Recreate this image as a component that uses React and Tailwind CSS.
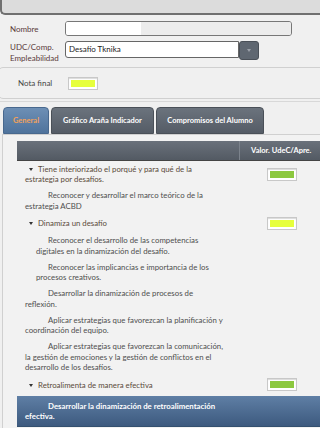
import React from 'react';

const rows = [
  { kind: 'group', lines: ['Tiene interiorizado el porqué y para qué de la', 'estrategia por desafíos.'], color: 'bg-[#8cc83f]' },
  { kind: 'item', lines: ['Reconocer y desarrollar el marco teórico de la', 'estrategia ACBD'] },
  { kind: 'group', lines: ['Dinamiza un desafío'], color: 'bg-[#e6ff3c]' },
  { kind: 'item', lines: ['Reconocer el desarrollo de las competencias', 'digitales en la dinamización del desafío.'], pad: true },
  { kind: 'item', lines: ['Reconocer las implicancias e importancia de los', 'procesos creativos.'], pad: true },
  { kind: 'item', lines: ['Desarrollar la dinamización de procesos de', 'reflexión.'] },
  { kind: 'item', lines: ['Aplicar estrategias que favorezcan la planificación y', 'coordinación del equipo.'] },
  { kind: 'item', lines: ['Aplicar estrategias que favorezcan la comunicación,', 'la gestión de emociones y la gestión de conflictos en el', 'desarrollo de los desafíos.'] },
  { kind: 'group', lines: ['Retroalimenta de manera efectiva'], color: 'bg-[#8cc83f]' },
  { kind: 'item', lines: ['Desarrollar la dinamización de retroalimentación', 'efectiva.'], selected: true },
  { kind: 'group', lines: ['Acompaña con empatía'], color: 'bg-[#8cc83f]' },
];

function Swatch({ color }) {
  return (
    <div className="w-[30px] h-[13px] border border-[#c8c8c8] bg-white p-[2px] shadow-[inset_0_1px_1px_rgba(0,0,0,0.15)]">
      <div className={`w-full h-full ${color}`} />
    </div>
  );
}

function Lines({ lines }) {
  return lines.map((l, i) => (
    <React.Fragment key={i}>
      {i > 0 && <br />}
      {l}
    </React.Fragment>
  ));
}

export default function App() {
  return (
    <div className="w-[320px] h-[428px] overflow-hidden bg-[#f0f0f0] text-[#444] font-['Lato',sans-serif]">
      <div className="h-[15px] bg-[#dcdcdc] border-b-2 border-l-2 border-[#707070] rounded-bl-[5px] w-[330px]" />

      <div className="flex items-center h-[15px] mt-[6px]">
        <div className="w-[65px] pl-[10px] text-[8px] text-[#5a3a3a]">Nombre</div>
        <div className="w-[227px] h-[15px] border border-[#777] rounded-[3px] flex overflow-hidden">
          <div className="w-[75px] bg-white" />
          <div className="flex-1 bg-[#ececec]" />
        </div>
      </div>

      <div className="flex items-start mt-[5px] h-[26px]">
        <div className="w-[65px] pl-[10px] pt-[1px] text-[8px] leading-[11px] text-[#5a3a3a]">
          UDC/Comp.<br />Empleabilidad
        </div>
        <div className="w-[174px] h-[17px] border border-[#666] rounded-l-[3px] bg-white text-[8px] text-[#222] pl-[3px] leading-[14px]">
          Desafío Tknika
        </div>
        <div className="w-[20px] h-[19px] rounded-[3px] bg-[#5f6771] border border-[#4a5058] flex items-center justify-center">
          <div className="w-0 h-0 border-l-[2.5px] border-r-[2.5px] border-t-[3px] border-l-transparent border-r-transparent border-t-[#9aa0a8]" />
        </div>
      </div>

      <div className="h-[32px] border border-[#d0d0d0] rounded-[5px] -ml-[2px] w-[330px] flex items-center">
        <div className="w-[69px] pl-[19px] text-[8px] text-[#444]">Nota final</div>
        <Swatch color="bg-[#e6ff3c]" />
      </div>

      <div className="mt-[2px] border-t border-[#d8d8d8] pt-[5px] pl-[3px] flex gap-[2px] h-[33px]">
        <div className="w-[46px] h-[27px] rounded-t-[4px] bg-gradient-to-b from-[#6d8fb5] to-[#4f739c] border border-[#48688e] flex items-center justify-center text-[7.5px] font-bold text-[#f2a15a]">
          General
        </div>
        <div className="w-[103px] h-[27px] rounded-t-[4px] bg-gradient-to-b from-[#6b737d] to-[#555c66] border border-[#4a5058] flex items-center justify-center text-[7.5px] font-bold text-white">
          Gráfico Araña Indicador
        </div>
        <div className="w-[108px] h-[27px] rounded-t-[4px] bg-gradient-to-b from-[#6b737d] to-[#555c66] border border-[#4a5058] flex items-center justify-center text-[7.5px] font-bold text-white">
          Compromisos del Alumno
        </div>
      </div>

      <div className="ml-[2px] border-l border-t border-[#d0d0d0] bg-[#f2f2f2] pt-[6px] pl-[14px] h-[300px]">
        <div className="flex h-[20px] bg-gradient-to-b from-[#6a717b] to-[#535a63] border-b border-[#444]">
          <div className="w-[223px] border-r border-[#7c838c]" />
          <div className="flex-1 flex items-center pl-[11px] text-[7.5px] font-bold text-white">
            Valor. UdeC/Apre.
          </div>
        </div>

        <div>
          {rows.map((r, i) =>
            r.kind === 'group' ? (
              <div key={i} className="flex items-center py-[2.75px]">
                <div
                  className="w-[223px] pl-[8px] whitespace-nowrap text-[7.8px] leading-[10.5px] text-[#5a4a3a]"
                  style={{ textIndent: '4px' }}
                >
                  <span className="inline-block w-0 h-0 mr-[5px] mb-[1px] align-middle border-l-[2.5px] border-r-[2.5px] border-t-[3px] border-l-transparent border-r-transparent border-t-[#333]" />
                  <Lines lines={r.lines} />
                </div>
                <div className="flex-1 pl-[27px]">
                  <Swatch color={r.color} />
                </div>
              </div>
            ) : (
              <div
                key={i}
                className={
                  r.selected
                    ? 'mt-[2px] py-[4.5px] bg-gradient-to-b from-[#5f7fa5] to-[#3d5a7f] border-b border-[#34506f] text-white font-bold'
                    : 'py-[2.75px]'
                }
              >
                <div
                  className={`w-[223px] ${r.pad ? 'pl-[19px]' : 'pl-[8px]'} whitespace-nowrap text-[7.8px] leading-[10.5px] ${r.selected ? '' : 'text-[#4e4e4e]'}`}
                  style={{ textIndent: r.pad ? '12px' : '23px' }}
                >
                  <Lines lines={r.lines} />
                </div>
              </div>
            )
          )}
        </div>
      </div>
    </div>
  );
}
